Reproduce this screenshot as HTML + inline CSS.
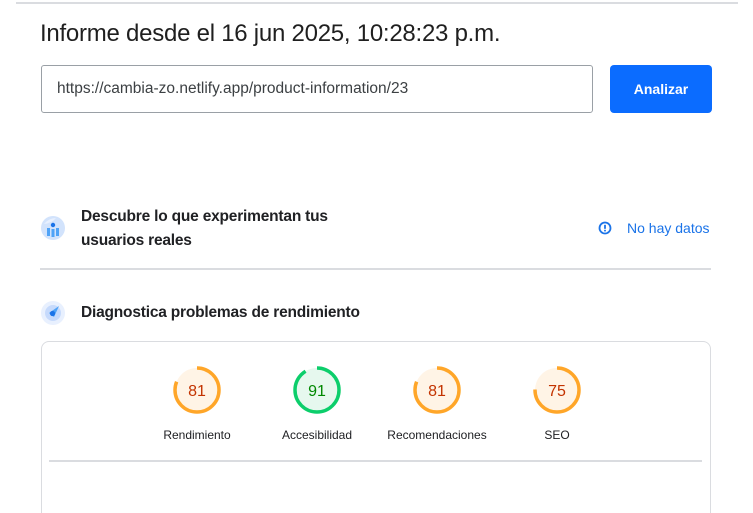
<!DOCTYPE html>
<html style="height:513px;overflow:hidden"><head><meta charset="utf-8"><style>
body{margin:0;width:753px;height:513px;background:#fff;position:relative;overflow:hidden;font-family:"Liberation Sans",Arial,sans-serif;color:#202124}
.a{position:absolute;white-space:nowrap}
</style></head><body>
<div class="a" style="left:16px;top:2px;width:722px;height:2px;background:#dadce0"></div>
<div class="a" style="left:40px;top:20px;font-size:24px;letter-spacing:-0.25px;color:#1f1f1f">Informe desde el 16 jun 2025, 10:28:23 p.m.</div>
<div class="a" style="left:41px;top:65px;width:550px;height:46px;border:1px solid #9aa0a6;border-radius:3px"></div>
<div class="a" style="left:57px;top:80px;font-size:15.5px;color:#3c4043">https://cambia-zo.netlify.app/product-information/23</div>
<div class="a" style="left:610px;top:65px;width:102px;height:48px;background:#0b6cff;border-radius:4px;color:#fff;font-size:14px;font-weight:bold;line-height:48px;text-align:center">Analizar</div>

<svg class="a" style="left:40px;top:215px" width="26" height="26" viewBox="0 0 26 26">
<circle cx="13" cy="13" r="12" fill="#d2e3fc"/><path d="M4 9 Q9 3 16 3 Q12 8 4 9Z" fill="#e8f0fe"/>
<circle cx="13" cy="10" r="2.2" fill="#1a73e8"/>
<rect x="7" y="13" width="3" height="8" fill="#4fa3f7"/><rect x="11.5" y="14" width="3" height="8" fill="#4fa3f7"/><rect x="16" y="13" width="3" height="8" fill="#4fa3f7"/>
</svg>
<div class="a" style="left:81px;top:205px;font-size:15.5px;line-height:24px;font-weight:bold;color:#202124;letter-spacing:-0.2px">Descubre lo que experimentan tus<br>usuarios reales</div>
<svg class="a" style="left:598px;top:221px" width="14" height="14" viewBox="0 0 14 14"><circle cx="7" cy="7" r="5.5" fill="none" stroke="#1a73e8" stroke-width="1.8"/><rect x="6.1" y="3.8" width="1.8" height="4" fill="#1a73e8"/><rect x="6.1" y="8.8" width="1.8" height="1.6" fill="#1a73e8"/></svg>
<div class="a" style="left:627px;top:220px;font-size:14px;color:#1a73e8">No hay datos</div>
<div class="a" style="left:40px;top:268px;width:671px;height:2px;background:#dadce0"></div>

<svg class="a" style="left:40px;top:300px" width="26" height="26" viewBox="0 0 26 26">
<circle cx="13" cy="13" r="12" fill="#e8f0fe"/><circle cx="13" cy="13" r="8" fill="#c6dafc"/>
<path d="M9 13 L19 6 L14 17 Z" fill="#4fa3f7"/><circle cx="12.5" cy="13.5" r="2.6" fill="#1a73e8"/>
</svg>
<div class="a" style="left:81px;top:304px;font-size:15.5px;font-weight:bold;color:#202124;letter-spacing:-0.2px">Diagnostica problemas de rendimiento</div>

<div class="a" style="left:41px;top:341px;width:668px;height:190px;border:1px solid #dadce0;border-radius:8px"></div>
<div class="a" style="left:49px;top:460px;width:653px;height:2px;background:#dadce0"></div>

<svg class="a" style="left:0;top:360px" width="753" height="95">
<g font-family="Liberation Sans, sans-serif">
<g transform="translate(197,30)"><circle r="22" fill="#fff4e6"/><circle r="22" fill="none" stroke="#ffa629" stroke-width="3.5" stroke-dasharray="112 200" transform="rotate(-90)"/><text y="6" text-anchor="middle" font-size="16" fill="#c33300">81</text></g>
<g transform="translate(317,30)"><circle r="22" fill="#e6f8ee"/><circle r="22" fill="none" stroke="#0cce6b" stroke-width="3.5" stroke-dasharray="126 200" transform="rotate(-90)"/><text y="6" text-anchor="middle" font-size="16" fill="#008800">91</text></g>
<g transform="translate(437,30)"><circle r="22" fill="#fff4e6"/><circle r="22" fill="none" stroke="#ffa629" stroke-width="3.5" stroke-dasharray="112 200" transform="rotate(-90)"/><text y="6" text-anchor="middle" font-size="16" fill="#c33300">81</text></g>
<g transform="translate(557,30)"><circle r="22" fill="#fff4e6"/><circle r="22" fill="none" stroke="#ffa629" stroke-width="3.5" stroke-dasharray="104 200" transform="rotate(-90)"/><text y="6" text-anchor="middle" font-size="16" fill="#c33300">75</text></g>
<g font-size="12" fill="#202124" text-anchor="middle">
<text x="197" y="79">Rendimiento</text><text x="317" y="79">Accesibilidad</text><text x="437" y="79">Recomendaciones</text><text x="557" y="79">SEO</text>
</g></g></svg>
</body></html>
